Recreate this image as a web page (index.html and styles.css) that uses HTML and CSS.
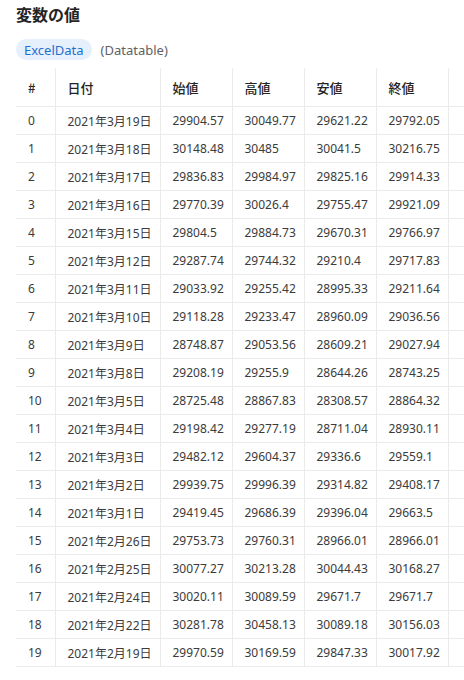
FILE: index.html
```html
<!DOCTYPE html>
<html lang="ja">
<head>
<meta charset="utf-8">
<link rel="stylesheet" href="styles.css">
</head>
<body>
<div class="page">
  <h1 class="title">変数の値</h1>
  <div class="meta">
    <span class="chip">ExcelData</span>
    <span class="type">(Datatable)</span>
  </div>
  <div class="scroller">
  <table class="grid">
    <colgroup>
      <col class="c-idx"><col class="c-date"><col class="c-num"><col class="c-num"><col class="c-num"><col class="c-num"><col class="c-extra">
    </colgroup>
    <thead>
      <tr><th>#</th><th>日付</th><th>始値</th><th>高値</th><th>安値</th><th>終値</th><th></th></tr>
    </thead>
    <tbody>
      <tr><td>0</td><td>2021年3月19日</td><td>29904.57</td><td>30049.77</td><td>29621.22</td><td>29792.05</td><td></td></tr>
      <tr><td>1</td><td>2021年3月18日</td><td>30148.48</td><td>30485</td><td>30041.5</td><td>30216.75</td><td></td></tr>
      <tr><td>2</td><td>2021年3月17日</td><td>29836.83</td><td>29984.97</td><td>29825.16</td><td>29914.33</td><td></td></tr>
      <tr><td>3</td><td>2021年3月16日</td><td>29770.39</td><td>30026.4</td><td>29755.47</td><td>29921.09</td><td></td></tr>
      <tr><td>4</td><td>2021年3月15日</td><td>29804.5</td><td>29884.73</td><td>29670.31</td><td>29766.97</td><td></td></tr>
      <tr><td>5</td><td>2021年3月12日</td><td>29287.74</td><td>29744.32</td><td>29210.4</td><td>29717.83</td><td></td></tr>
      <tr><td>6</td><td>2021年3月11日</td><td>29033.92</td><td>29255.42</td><td>28995.33</td><td>29211.64</td><td></td></tr>
      <tr><td>7</td><td>2021年3月10日</td><td>29118.28</td><td>29233.47</td><td>28960.09</td><td>29036.56</td><td></td></tr>
      <tr><td>8</td><td>2021年3月9日</td><td>28748.87</td><td>29053.56</td><td>28609.21</td><td>29027.94</td><td></td></tr>
      <tr><td>9</td><td>2021年3月8日</td><td>29208.19</td><td>29255.9</td><td>28644.26</td><td>28743.25</td><td></td></tr>
      <tr><td>10</td><td>2021年3月5日</td><td>28725.48</td><td>28867.83</td><td>28308.57</td><td>28864.32</td><td></td></tr>
      <tr><td>11</td><td>2021年3月4日</td><td>29198.42</td><td>29277.19</td><td>28711.04</td><td>28930.11</td><td></td></tr>
      <tr><td>12</td><td>2021年3月3日</td><td>29482.12</td><td>29604.37</td><td>29336.6</td><td>29559.1</td><td></td></tr>
      <tr><td>13</td><td>2021年3月2日</td><td>29939.75</td><td>29996.39</td><td>29314.82</td><td>29408.17</td><td></td></tr>
      <tr><td>14</td><td>2021年3月1日</td><td>29419.45</td><td>29686.39</td><td>29396.04</td><td>29663.5</td><td></td></tr>
      <tr><td>15</td><td>2021年2月26日</td><td>29753.73</td><td>29760.31</td><td>28966.01</td><td>28966.01</td><td></td></tr>
      <tr><td>16</td><td>2021年2月25日</td><td>30077.27</td><td>30213.28</td><td>30044.43</td><td>30168.27</td><td></td></tr>
      <tr><td>17</td><td>2021年2月24日</td><td>30020.11</td><td>30089.59</td><td>29671.7</td><td>29671.7</td><td></td></tr>
      <tr><td>18</td><td>2021年2月22日</td><td>30281.78</td><td>30458.13</td><td>30089.18</td><td>30156.03</td><td></td></tr>
      <tr><td>19</td><td>2021年2月19日</td><td>29970.59</td><td>30169.59</td><td>29847.33</td><td>30017.92</td><td></td></tr>
    </tbody>
  </table>
  </div>
</div>
</body>
</html>
```

FILE: styles.css
```css
html, body {
  margin: 0;
  padding: 0;
  background: #ffffff;
}
body {
  font-family: "Noto Sans", "Noto Sans CJK JP", sans-serif;
  color: #333333;
}
.page {
  padding: 0 0 0 16px;
}
.title {
  margin: 0;
  font-family: "Noto Sans CJK JP", sans-serif;
  font-size: 16px;
  font-weight: 700;
  line-height: 28px;
  color: #242424;
}
.meta {
  display: flex;
  align-items: center;
  gap: 9px;
  margin-top: 11px;
  height: 21px;
}
.chip {
  display: inline-flex;
  align-items: center;
  height: 21px;
  padding: 0 8px;
  border-radius: 11px;
  background: #e6f0fc;
  color: #1f6fd1;
  font-size: 13px;
}
.type {
  font-size: 13px;
  color: #616161;
}
.scroller {
  margin-top: 8px;
  overflow: hidden;
}
.grid {
  border-collapse: collapse;
  table-layout: fixed;
  width: 560px;
}
.c-idx { width: 39px; }
.c-date { width: 105px; }
.c-num { width: 72px; }
.c-extra { width: 128px; }
.grid th, .grid td {
  padding: 0 0 0 12px;
  text-align: left;
  white-space: nowrap;
  border-left: 1px solid #ebebeb;
  border-bottom: 1px solid #ebebeb;
}
.grid th:first-child, .grid td:first-child {
  border-left: none;
}
.grid th {
  height: 38px;
  font-family: "Noto Sans CJK JP", sans-serif;
  font-size: 13px;
  font-weight: 500;
  color: #242424;
}
.grid td {
  height: 27px;
  font-family: "Noto Sans", "Noto Sans CJK JP", sans-serif;
  font-size: 12px;
  color: #3b3b3b;
}
```
